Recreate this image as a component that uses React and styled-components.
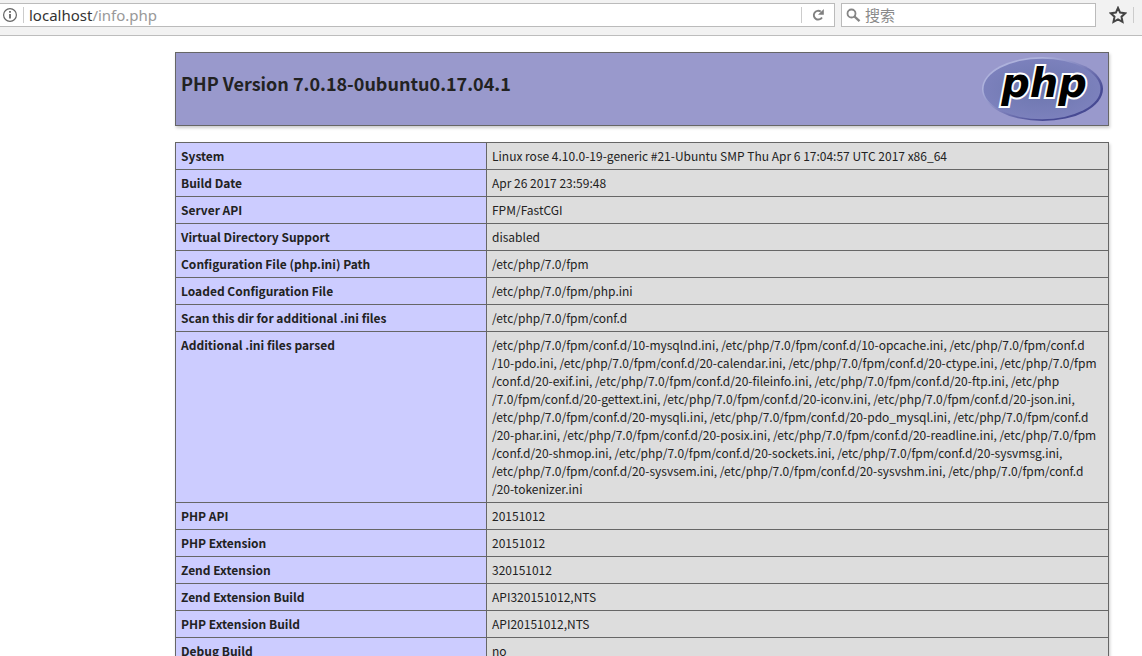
import React from 'react';
import styled, { createGlobalStyle } from 'styled-components';

const GlobalStyle = createGlobalStyle`
  body {
    margin: 0;
    background: #ffffff;
    color: #222222;
    font-family: 'Noto Sans CJK SC', sans-serif;
  }
`;

const Browser = styled.div`
  display: flex;
  flex-direction: column;
  height: 100vh;
  overflow: hidden;
`;

/* toolbar */

const Toolbar = styled.header`
  display: flex;
  flex: none;
  align-items: center;
  box-sizing: border-box;
  height: 36px;
  padding: 3px 8px 8px 0;
  background: #f2f2f2;
  border-bottom: 1px solid #bdbdbd;
`;

const Field = styled.div`
  display: flex;
  align-items: center;
  box-sizing: border-box;
  height: 24px;
  background: #ffffff;
  border: 1px solid #bbbbbb;
`;

const AddressBar = styled(Field)`
  flex: 1;
  border-left: none;
`;

const SearchBar = styled(Field)`
  width: 255px;
  margin: 0 6px;
  padding-left: 4px;
  gap: 4px;
`;

const IconButton = styled.button`
  display: flex;
  flex: none;
  align-items: center;
  justify-content: center;
  width: ${(props) => props.$width}px;
  height: 24px;
  padding: 0;
  border: none;
  background: none;
`;

const SiteButton = styled(IconButton)`
  margin-right: 4px;
`;

const Divider = styled.span`
  width: 1px;
  height: 16px;
  background: #cccccc;
`;

const Address = styled.label`
  position: relative;
  flex: 1;
  height: 22px;
  margin-left: 5px;
  font: 15px/22px 'Noto Sans', sans-serif;
  color: #999999;
`;

const AddressInput = styled.input`
  position: absolute;
  inset: 0;
  width: 100%;
  padding: 0;
  border: none;
  outline: none;
  background: none;
  font: inherit;
  color: transparent;
`;

const Host = styled.span`
  color: #333333;
`;

const SearchInput = styled.input`
  flex: 1;
  min-width: 0;
  padding: 0;
  border: none;
  outline: none;
  background: none;
  font: 15px/22px 'Noto Sans CJK SC', sans-serif;

  &::placeholder {
    color: #8a8a8a;
    opacity: 1;
  }
`;

/* page */

const Page = styled.main`
  flex: 1;
  min-height: 0;
  overflow: hidden;
  padding: 16px 33px 0 175px;
`;

const Banner = styled.section`
  display: flex;
  justify-content: space-between;
  box-sizing: border-box;
  height: 74px;
  margin-bottom: 16px;
  padding: 3px 5px;
  background: #9999cc;
  border: 1px solid #666666;
  box-shadow: 1px 2px 3px #cccccc;
`;

const Title = styled.h1`
  margin: 13px 0 0;
  font-size: 18px;
  line-height: 28px;
  font-weight: 700;
`;

const Table = styled.table`
  width: 100%;
  border-collapse: collapse;
  box-shadow: 1px 2px 3px #cccccc;
  font-size: 12px;
  line-height: 18px;
`;

const Key = styled.th`
  width: 300px;
  padding: 4px 5px;
  border: 1px solid #666666;
  background: #ccccff;
  font-weight: 700;
  text-align: left;
  vertical-align: top;
`;

const Value = styled.td`
  padding: 4px 5px;
  border: 1px solid #666666;
  background: #dddddd;
  white-space: nowrap;
`;

const iniFiles = [
  '/etc/php/7.0/fpm/conf.d/10-mysqlnd.ini, /etc/php/7.0/fpm/conf.d/10-opcache.ini, /etc/php/7.0/fpm/conf.d',
  '/10-pdo.ini, /etc/php/7.0/fpm/conf.d/20-calendar.ini, /etc/php/7.0/fpm/conf.d/20-ctype.ini, /etc/php/7.0/fpm',
  '/conf.d/20-exif.ini, /etc/php/7.0/fpm/conf.d/20-fileinfo.ini, /etc/php/7.0/fpm/conf.d/20-ftp.ini, /etc/php',
  '/7.0/fpm/conf.d/20-gettext.ini, /etc/php/7.0/fpm/conf.d/20-iconv.ini, /etc/php/7.0/fpm/conf.d/20-json.ini,',
  '/etc/php/7.0/fpm/conf.d/20-mysqli.ini, /etc/php/7.0/fpm/conf.d/20-pdo_mysql.ini, /etc/php/7.0/fpm/conf.d',
  '/20-phar.ini, /etc/php/7.0/fpm/conf.d/20-posix.ini, /etc/php/7.0/fpm/conf.d/20-readline.ini, /etc/php/7.0/fpm',
  '/conf.d/20-shmop.ini, /etc/php/7.0/fpm/conf.d/20-sockets.ini, /etc/php/7.0/fpm/conf.d/20-sysvmsg.ini,',
  '/etc/php/7.0/fpm/conf.d/20-sysvsem.ini, /etc/php/7.0/fpm/conf.d/20-sysvshm.ini, /etc/php/7.0/fpm/conf.d',
  '/20-tokenizer.ini',
];

const rows = [
  ['System', 'Linux rose 4.10.0-19-generic #21-Ubuntu SMP Thu Apr 6 17:04:57 UTC 2017 x86_64'],
  ['Build Date', 'Apr 26 2017 23:59:48'],
  ['Server API', 'FPM/FastCGI'],
  ['Virtual Directory Support', 'disabled'],
  ['Configuration File (php.ini) Path', '/etc/php/7.0/fpm'],
  ['Loaded Configuration File', '/etc/php/7.0/fpm/php.ini'],
  ['Scan this dir for additional .ini files', '/etc/php/7.0/fpm/conf.d'],
  ['Additional .ini files parsed', iniFiles],
  ['PHP API', '20151012'],
  ['PHP Extension', '20151012'],
  ['Zend Extension', '320151012'],
  ['Zend Extension Build', 'API320151012,NTS'],
  ['PHP Extension Build', 'API20151012,NTS'],
  ['Debug Build', 'no'],
];

const InfoIcon = () => (
  <svg width="16" height="16" viewBox="0 0 16 16" fill="none" stroke="#666666">
    <circle cx="8" cy="8" r="6.4" strokeWidth="1.2" />
    <path d="M8 7v4.5M8 4v1.8" strokeWidth="1.8" />
  </svg>
);

const ReloadIcon = () => (
  <svg width="14" height="14" viewBox="0 0 14 14" fill="none">
    <path d="M11 9.4A4.4 4.4 0 1 1 9.8 3.6" stroke="#808080" strokeWidth="1.9" />
    <path d="M12.8 1v5.8H7z" fill="#808080" />
  </svg>
);

const SearchIcon = () => (
  <svg width="15" height="15" viewBox="0 0 15 15" fill="none" stroke="#858585">
    <circle cx="5.5" cy="5.5" r="4" strokeWidth="1.8" />
    <path d="M8.5 8.5l5 4.7" strokeWidth="2.4" />
  </svg>
);

const StarIcon = () => (
  <svg width="18" height="18" viewBox="0 0 18 18">
    <path
      d="M9 1.9l2.1 4.7 5.2.6-3.8 3.5 1 5.2L9 13.3l-4.5 2.6 1-5.2L1.7 7.2l5.2-.6z"
      fill="none"
      stroke="#444444"
      strokeWidth="2"
    />
  </svg>
);

const PhpLogo = () => (
  <svg width="122" height="66" viewBox="0 0 122 66" role="img" aria-label="PHP logo">
    <defs>
      <linearGradient id="rim" x1="0" y1="0" x2="1" y2="1">
        <stop offset="0.25" stopColor="#aeb2dc" />
        <stop offset="0.5" stopColor="#7d80bb" />
        <stop offset="0.75" stopColor="#474a93" />
      </linearGradient>
      <radialGradient id="disc" cx="0.5" cy="0.5" r="0.6">
        <stop offset="0" stopColor="#6c76ae" />
        <stop offset="1" stopColor="#7f83bf" />
      </radialGradient>
    </defs>
    <ellipse cx="61.5" cy="33" rx="60.5" ry="32" fill="url(#rim)" />
    <ellipse cx="61" cy="33" rx="58.5" ry="30.2" fill="url(#disc)" />
    <text
      x="63"
      y="41"
      textAnchor="middle"
      fontFamily="DejaVu Sans"
      fontSize="40"
      fontWeight="700"
      fontStyle="italic"
      fill="#000000"
      stroke="#ffffff"
      strokeWidth="4"
      strokeLinejoin="miter"
      paintOrder="stroke"
    >
      php
    </text>
  </svg>
);

const App = () => {
  return (
    <>
      <GlobalStyle />
      <Browser>
        <Toolbar>
          <AddressBar>
            <SiteButton $width={19} aria-label="Site information">
              <InfoIcon />
            </SiteButton>
            <Divider />
            <Address>
              <Host>localhost</Host>/info.php
              <AddressInput type="text" aria-label="Address" />
            </Address>
            <Divider />
            <IconButton $width={32} aria-label="Reload">
              <ReloadIcon />
            </IconButton>
          </AddressBar>
          <SearchBar>
            <SearchIcon />
            <SearchInput type="search" placeholder="搜索" aria-label="搜索" />
          </SearchBar>
          <IconButton $width={31} aria-label="Bookmark">
            <StarIcon />
          </IconButton>
          <Divider />
        </Toolbar>

        <Page>
          <Banner>
            <Title>PHP Version 7.0.18-0ubuntu0.17.04.1</Title>
            <PhpLogo />
          </Banner>
          <Table>
            <tbody>
              {rows.map(([name, value]) => (
                <tr key={name}>
                  <Key scope="row">{name}</Key>
                  <Value>
                    {Array.isArray(value)
                      ? value.map((line) => (
                          <React.Fragment key={line}>
                            {line}
                            <br />
                          </React.Fragment>
                        ))
                      : value}
                  </Value>
                </tr>
              ))}
            </tbody>
          </Table>
        </Page>
      </Browser>
    </>
  );
};

export default App;
